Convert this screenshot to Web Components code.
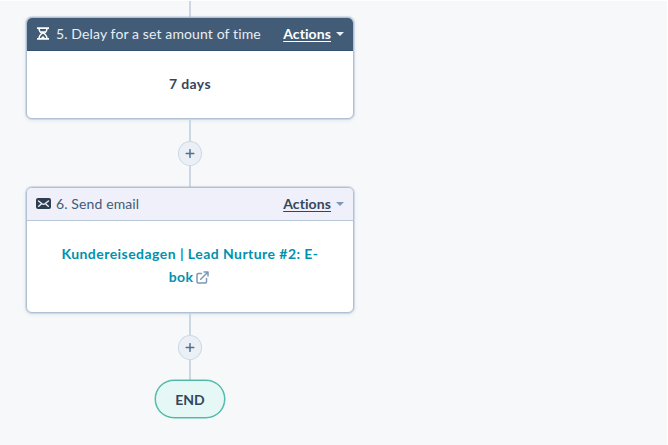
<!DOCTYPE html>
<html lang="en">
<head>
<meta charset="utf-8">
<title>Workflow</title>
<style>
  html {
    height: 100%;
    background: #fff;
  }

  body {
    margin: 1px 1px 0 0;
    height: calc(100% - 1px);
    overflow: hidden;
    background: #f6f8fa;
    font-family: Lato, "Liberation Sans", sans-serif;
    font-size: 14px;
    color: #33475b;
  }
</style>
</head>
<body>

<workflow-flow>
  <flow-line style="--length: 16px"></flow-line>
  <action-card style="--height: 102px; --header: #425b76; --header-text: #e8eef4; --link: #fff; --caret: #eaf0f6; --divider: #33526f">
    <hourglass-icon slot="icon"></hourglass-icon>
    <span slot="title">5. Delay for a set amount of time</span>
    <span>7 days</span>
  </action-card>
  <flow-line style="--length: 22px"></flow-line>
  <add-button></add-button>
  <flow-line style="--length: 21px"></flow-line>
  <action-card style="--height: 126px; --body-spacing: 0.45px">
    <mail-icon slot="icon"></mail-icon>
    <span slot="title">6. Send email</span>
    <email-link>Kundereisedagen | Lead Nurture #2: E-<br>bok</email-link>
  </action-card>
  <flow-line style="--length: 22px"></flow-line>
  <add-button></add-button>
  <flow-line style="--length: 20px"></flow-line>
  <end-node>END</end-node>
</workflow-flow>

<script>
class WorkflowFlow extends HTMLElement {
  constructor() {
    super();
    this.attachShadow({ mode: 'open' });
    this.shadowRoot.innerHTML = `
      <style>
        :host {
          display: flex;
          flex-direction: column;
          align-items: center;
          width: 328px;
          margin-left: 26px;
        }
      </style>
      <slot></slot>
    `;
  }
}

class FlowLine extends HTMLElement {
  constructor() {
    super();
    this.attachShadow({ mode: 'open' });
    this.shadowRoot.innerHTML = `
      <style>
        :host {
          display: block;
          flex: none;
          width: 2px;
          height: var(--length);
          background: #cbd8e4;
        }
      </style>
    `;
  }
}

class ActionCard extends HTMLElement {
  constructor() {
    super();
    this.attachShadow({ mode: 'open' });
    this.shadowRoot.innerHTML = `
      <style>
        :host {
          display: flex;
          flex-direction: column;
          flex: none;
          box-sizing: border-box;
          width: 328px;
          height: var(--height);
          border: 1px solid #b0c1d4;
          border-radius: 6px;
          background: #fff;
          overflow: hidden;
          box-shadow: 0 0 0 1px rgba(160, 180, 205, 0.35), 0 1px 4px rgba(45, 62, 80, 0.12);
        }

        .header {
          display: flex;
          align-items: center;
          box-sizing: border-box;
          height: 33px;
          padding: 0 9px 1px 8px;
          background: var(--header, #f0f0fa);
          color: var(--header-text, #425b76);
          border-bottom: 1px solid var(--divider, #b8c7d8);
        }

        .icon {
          display: flex;
          width: 16px;
          margin-right: 5px;
          justify-content: center;
        }

        .title {
          flex: 1;
          white-space: nowrap;
          letter-spacing: 0.12px;
        }

        .actions {
          font-weight: bold;
          letter-spacing: 0.1px;
          color: var(--link, #33475b);
          text-decoration: underline;
          text-underline-offset: 2px;
        }

        .caret {
          width: 0;
          margin-left: 5px;
          border: 4px solid transparent;
          border-top: 4px solid var(--caret, #7c98b6);
          border-bottom: none;
        }

        .body {
          flex: 1;
          display: flex;
          align-items: center;
          justify-content: center;
          padding-bottom: 3px;
          text-align: center;
          font-weight: bold;
          line-height: 23px;
          letter-spacing: var(--body-spacing, 0.35px);
        }
      </style>

      <div class="header">
        <div class="icon"><slot name="icon"></slot></div>
        <div class="title"><slot name="title"></slot></div>
        <div class="actions">Actions</div>
        <div class="caret"></div>
      </div>
      <div class="body"><slot></slot></div>
    `;
  }
}

class EmailLink extends HTMLElement {
  constructor() {
    super();
    this.attachShadow({ mode: 'open' });
    this.shadowRoot.innerHTML = `
      <style>
        :host {
          display: block;
          color: #0091ae;
        }

        svg {
          vertical-align: -2px;
          margin: 0 2px 0 -1px;
        }
      </style>
      <slot></slot>
      <svg width="13" height="13" viewBox="0 0 13 13" fill="none" stroke="#7c98b6" stroke-width="1.5" stroke-linecap="round" stroke-linejoin="round">
        <path d="M5.5 2.5H2.2Q1 2.5 1 3.7V10.8Q1 12 2.2 12H9.3Q10.5 12 10.5 10.8V7.5"/>
        <path d="M4.7 8.3L11.5 1.5M8 1H12V5"/>
      </svg>
    `;
  }
}

class HourglassIcon extends HTMLElement {
  constructor() {
    super();
    this.attachShadow({ mode: 'open' });
    this.shadowRoot.innerHTML = `
      <style>
        :host { display: block; height: 13px; }
        svg { display: block; }
      </style>
      <svg width="12" height="13" viewBox="0 0 12 13" fill="none" stroke="#fff">
        <path stroke-width="1.8" d="M0 1.2H12M0 11.8H12"/>
        <path stroke-width="1.4" d="M2 1.5Q2 4.5 5 6.5Q2 8.5 2 11.5M10 1.5Q10 4.5 7 6.5Q10 8.5 10 11.5"/>
        <path fill="#fff" stroke="none" d="M3.5 4.2H8.5L6 7ZM3.5 11.5L6 9L8.5 11.5Z"/>
      </svg>
    `;
  }
}

class MailIcon extends HTMLElement {
  constructor() {
    super();
    this.attachShadow({ mode: 'open' });
    this.shadowRoot.innerHTML = `
      <style>
        :host { display: block; height: 11px; }
        svg { display: block; }
      </style>
      <svg width="15" height="11" viewBox="0 0 15 11">
        <rect width="15" height="11" rx="2" fill="#2d3e50"/>
        <path fill="none" stroke="#f0f0fa" stroke-width="1.4" stroke-linecap="round" d="M2.5 3L6.1 5.8Q7.5 6.8 8.9 5.8L12.5 3M2.7 8.3L5 6.3M12.3 8.3L10 6.3"/>
      </svg>
    `;
  }
}

class AddButton extends HTMLElement {
  constructor() {
    super();
    this.attachShadow({ mode: 'open' });
    this.shadowRoot.innerHTML = `
      <style>
        :host {
          display: flex;
          flex: none;
          align-items: center;
          justify-content: center;
          box-sizing: border-box;
          width: 24px;
          height: 25px;
          border: 1px solid #cbd8e5;
          border-radius: 50%;
          background: #eaf0f6;
        }
      </style>
      <svg width="10" height="9" viewBox="0 0 10 9" stroke="#516f90" stroke-width="1.5" stroke-linecap="round">
        <path d="M5 .7V8.3M1.2 4.5H8.8"/>
      </svg>
    `;
  }
}

class EndNode extends HTMLElement {
  constructor() {
    super();
    this.attachShadow({ mode: 'open' });
    this.shadowRoot.innerHTML = `
      <style>
        :host {
          display: flex;
          flex: none;
          align-items: center;
          justify-content: center;
          box-sizing: border-box;
          width: 70px;
          height: 38px;
          border: 1px solid #4fb9a8;
          border-radius: 19px;
          background: #e5f8f6;
          box-shadow: 0 0 0 0.5px #5bbfae;
          font-weight: bold;
        }
      </style>
      <slot></slot>
    `;
  }
}

customElements.define('workflow-flow', WorkflowFlow);
customElements.define('flow-line', FlowLine);
customElements.define('action-card', ActionCard);
customElements.define('email-link', EmailLink);
customElements.define('hourglass-icon', HourglassIcon);
customElements.define('mail-icon', MailIcon);
customElements.define('add-button', AddButton);
customElements.define('end-node', EndNode);
</script>
</body>
</html>
